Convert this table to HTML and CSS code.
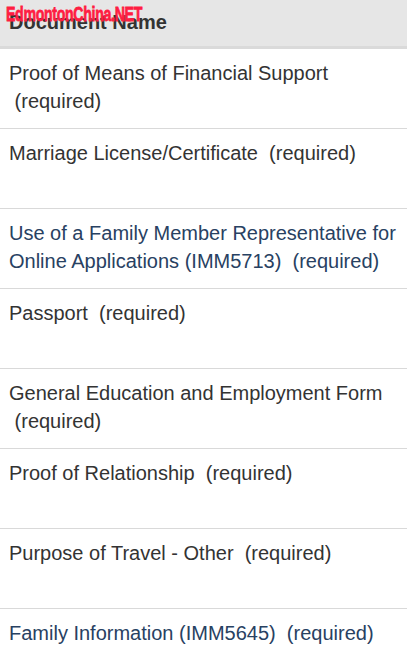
FILE: index.html
```
<!DOCTYPE html>
<html>
<head>
<meta charset="utf-8">
<link rel="stylesheet" href="styles.css">
</head>
<body>
<div class="page">
  <div class="watermark">EdmontonChina.NET</div>
  <div class="table">
    <div class="head">Document Name</div>
    <div class="row">Proof of Means of Financial Support<br>&nbsp;(required)</div>
    <div class="row">Marriage License/Certificate&nbsp; (required)</div>
    <div class="row link">Use of a Family Member Representative for Online Applications (IMM5713)&nbsp; (required)</div>
    <div class="row">Passport&nbsp; (required)</div>
    <div class="row">General Education and Employment Form<br>&nbsp;(required)</div>
    <div class="row">Proof of Relationship&nbsp; (required)</div>
    <div class="row">Purpose of Travel - Other&nbsp; (required)</div>
    <div class="row link">Family Information (IMM5645)&nbsp; (required)</div>
  </div>
</div>
</body>
</html>
```
FILE: styles.css
```
html, body {
  margin: 0;
  padding: 0;
  background: #fff;
}
.page {
  position: relative;
  width: 407px;
  font-family: "Liberation Sans", Arial, sans-serif;
  font-size: 20px;
  color: #333;
}
.watermark {
  position: absolute;
  left: 6px;
  top: 2px;
  font-weight: bold;
  font-size: 21px;
  color: #ff1d42;
  letter-spacing: -0.5px;
  -webkit-text-stroke: 0.8px #ff1d42;
  transform: scaleX(0.675);
  transform-origin: left top;
  z-index: 2;
}
.table {
  display: flex;
  flex-direction: column;
}
.head {
  height: 46px;
  background: #e6e6e6;
  border-bottom: 3px solid #dadada;
  padding: 0 9px;
  font-weight: bold;
  line-height: 44px;
}
.row {
  height: 80px;
  box-sizing: border-box;
  padding: 10px 9px 0;
  line-height: 28px;
  border-bottom: 1px solid #d9d9d9;
}
.row.link {
  color: #284162;
}
```
